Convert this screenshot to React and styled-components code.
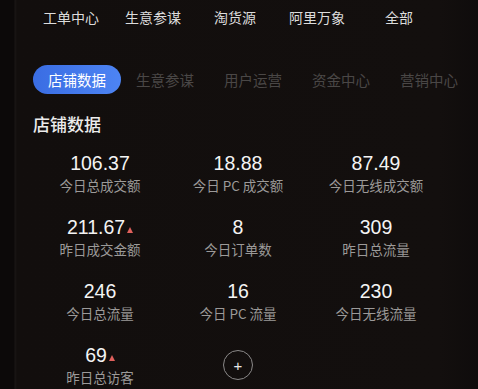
import React from "react"
import styled, { createGlobalStyle } from "styled-components"

const GlobalStyle = createGlobalStyle`
  html, body {
    margin: 0;
    padding: 0;
    background: #110d0c;
  }
  body {
    font-family: "Noto Sans CJK SC", "Noto Sans", sans-serif;
    -webkit-font-smoothing: antialiased;
  }
`

const Screen = styled.div`
  width: 478px;
  height: 389px;
  overflow: hidden;
  background: linear-gradient(90deg, #0c0909 0, #0c0909 14px, #1a1615 15px, #120e0d 17px, #130f0e 440px, #0f0c0c 478px);
`

const TopMenu = styled.nav`
  display: grid;
  grid-template-columns: repeat(5, 82px);
  margin-left: 30px;
  height: 34px;
  align-items: center;
`

const MenuItem = styled.span`
  text-align: center;
  font-size: 14px;
  line-height: 20px;
  color: #dcdcdc;
`

const Tabs = styled.div`
  display: flex;
  margin: 31px 0 0 33px;
  height: 29px;
`

const Tab = styled.span`
  display: flex;
  align-items: center;
  padding: 0 15px;
  border-radius: 15px;
  font-size: 14.5px;
  white-space: nowrap;
  color: ${(p) => (p.$active ? "#ffffff" : "#4a4746")};
  background: ${(p) => (p.$active ? "linear-gradient(90deg, #3a6de3, #4d84f3)" : "transparent")};
`

const Title = styled.h2`
  margin: 18px 0 0 33px;
  font-size: 17px;
  line-height: 24px;
  font-weight: 500;
  color: #ececec;
`

const Grid = styled.div`
  display: grid;
  grid-template-columns: repeat(3, 138px);
  grid-auto-rows: 42px;
  row-gap: 22px;
  margin: 16px 0 0 31px;
`

const Cell = styled.div`
  display: flex;
  flex-direction: column;
  align-items: center;
  gap: 2px;
`

const Value = styled.div`
  display: flex;
  align-items: center;
  font-family: "Liberation Sans", "Noto Sans", sans-serif;
  font-size: 19.5px;
  line-height: 22px;
  color: #f4f4f4;
`

const Up = styled.span`
  width: 0;
  height: 0;
  margin: 5px 0 0 2px;
  border-left: 3.5px solid transparent;
  border-right: 3.5px solid transparent;
  border-bottom: 6px solid #e0605c;
`

const Label = styled.div`
  font-size: 13.5px;
  line-height: 18px;
  color: #9c9a99;
  white-space: nowrap;
`

const AddButton = styled.button`
  width: 30px;
  height: 30px;
  margin-top: 6px;
  border-radius: 50%;
  border: 1.5px solid #8a8888;
  background: transparent;
  color: #e8e8e8;
  font-size: 15px;
  line-height: 1;
  padding: 0;
  display: flex;
  align-items: center;
  justify-content: center;
  font-family: "Liberation Sans", sans-serif;
`

const menu = ["工单中心", "生意参谋", "淘货源", "阿里万象", "全部"]
const tabs = ["店铺数据", "生意参谋", "用户运营", "资金中心", "营销中心"]
const stats = [
  { value: "106.37", label: "今日总成交额" },
  { value: "18.88", label: "今日 PC 成交额" },
  { value: "87.49", label: "今日无线成交额" },
  { value: "211.67", label: "昨日成交金额", up: true },
  { value: "8", label: "今日订单数" },
  { value: "309", label: "昨日总流量" },
  { value: "246", label: "今日总流量" },
  { value: "16", label: "今日 PC 流量" },
  { value: "230", label: "今日无线流量" },
  { value: "69", label: "昨日总访客", up: true },
]

const App = () => {
  return (
    <Screen>
      <GlobalStyle />
      <TopMenu>
        {menu.map((m) => (
          <MenuItem key={m}>{m}</MenuItem>
        ))}
      </TopMenu>
      <Tabs>
        {tabs.map((t, i) => (
          <Tab key={t} $active={i === 0}>
            {t}
          </Tab>
        ))}
      </Tabs>
      <Title>店铺数据</Title>
      <Grid>
        {stats.map((s) => (
          <Cell key={s.label}>
            <Value>
              {s.value}
              {s.up && <Up />}
            </Value>
            <Label>{s.label}</Label>
          </Cell>
        ))}
        <Cell>
          <AddButton>+</AddButton>
        </Cell>
      </Grid>
    </Screen>
  )
}

export default App
